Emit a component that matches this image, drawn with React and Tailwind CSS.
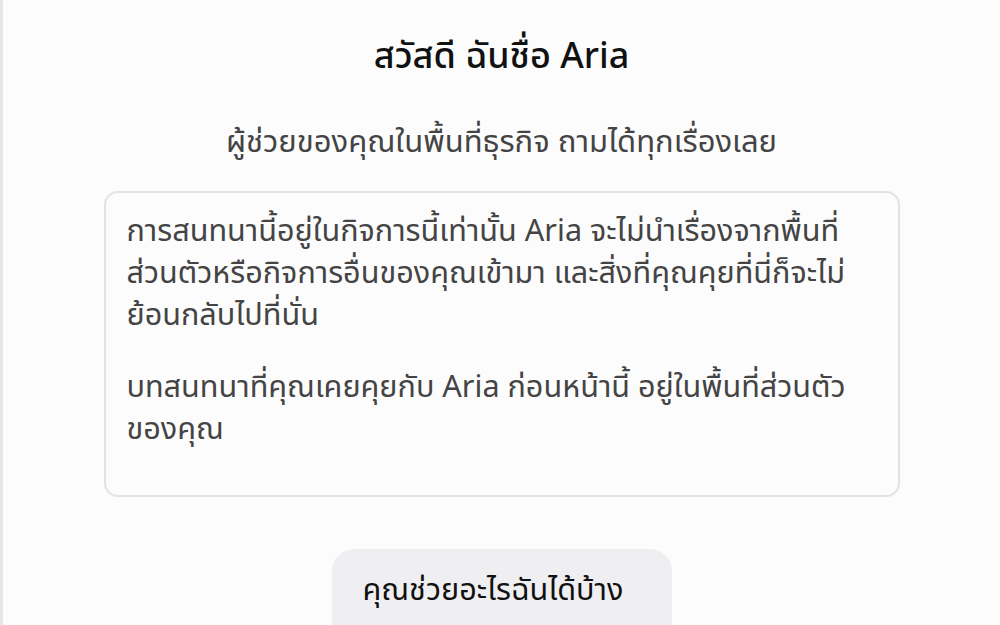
import React from "react";

export default function App() {
  return (
    <div
      className="min-h-screen h-[625px] overflow-hidden bg-[#fcfcfd] border-l-[3px] border-[#e6e6e9]"
      style={{ fontFamily: '"Noto Sans", "Noto Sans Thai", sans-serif' }}
    >
      <div className="flex flex-col items-center pt-[28px]">
        <h1 className="text-[36px] leading-[54px] font-medium text-[#111]">
          สวัสดี ฉันชื่อ Aria
        </h1>
        <p className="mt-[38px] text-[31px] leading-[40px] text-[#444]">
          ผู้ช่วยของคุณในพื้นที่ธุรกิจ ถามได้ทุกเรื่องเลย
        </p>
        <div className="mt-[31px] w-[796px] h-[306px] rounded-[14px] border-2 border-[#e3e3e6] px-[21px] pt-[15px] text-[30.6px] leading-[42px] text-[#444] whitespace-nowrap">
          <p>
            การสนทนานี้อยู่ในกิจการนี้เท่านั้น Aria จะไม่นำเรื่องจากพื้นที่
            <br />
            ส่วนตัวหรือกิจการอื่นของคุณเข้ามา และสิ่งที่คุณคุยที่นี่ก็จะไม่
            <br />
            ย้อนกลับไปที่นั่น
          </p>
          <p className="mt-[30px]">
            บทสนทนาที่คุณเคยคุยกับ Aria ก่อนหน้านี้ อยู่ในพื้นที่ส่วนตัว
            <br />
            ของคุณ
          </p>
        </div>
        <button className="mt-[52px] w-[340px] h-[100px] rounded-[22px] bg-[#efeff1] text-left pl-[31px] pb-[20px] text-[30.6px] text-[#111]">
          คุณช่วยอะไรฉันได้บ้าง
        </button>
      </div>
    </div>
  );
}
